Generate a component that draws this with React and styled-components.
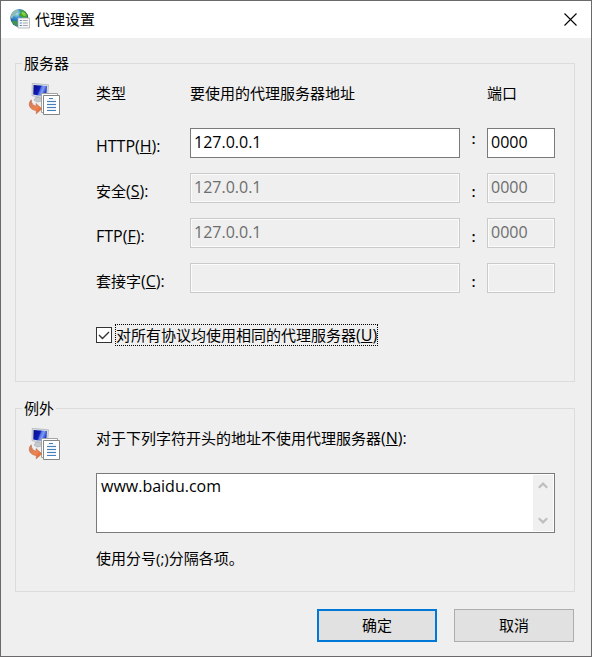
import React from "react";
import styled, { createGlobalStyle } from "styled-components";

const GlobalStyle = createGlobalStyle`
  *, *::before, *::after { box-sizing: border-box; }
  body { margin: 0; background: #efefef; }
  body, button, input, textarea {
    font-family: "Open Sans", "Noto Sans CJK SC", sans-serif;
    font-size: 15px;
    line-height: 20px;
    color: #000;
  }
`;

const Dialog = styled.main`
  display: flex;
  flex-direction: column;
  min-height: 100vh;
  border: 1px solid #6b696b;
  background: #efefef;
`;

const TitleBar = styled.header`
  display: flex;
  align-items: center;
  gap: 5px;
  height: 37px;
  padding: 0 0 1px 9px;
  background: #fff;
`;

const Title = styled.h1`
  flex: 1;
  margin: 0;
  font-size: 15px;
  font-weight: 400;
`;

const CloseButton = styled.button`
  display: flex;
  align-items: center;
  justify-content: center;
  width: 42px;
  height: 35px;
  padding: 0;
  border: 0;
  background: none;
`;

const Content = styled.form`
  display: flex;
  flex: 1;
  flex-direction: column;
  gap: 16px;
  padding: 15px 16px 14px 14px;
`;

const Group = styled.fieldset`
  min-width: 0;
  margin: 0;
  padding: 0 19px 0 12px;
  border: 1px solid #dcdcdc;
`;

const Legend = styled.legend`
  margin-left: -6px;
  padding: 0 2px;
`;

const GroupBody = styled.div`
  display: grid;
  grid-template-columns: 32px minmax(0, 1fr);
  column-gap: 36px;
  padding: ${(p) => p.$pad};
`;

const ProxyGrid = styled.div`
  display: grid;
  grid-template-columns: 94px minmax(0, 1fr) 27px 68px;
  grid-template-rows: 30px;
  row-gap: 15px;
`;

const Heading = styled.span`
  grid-column: ${(p) => p.$column};
`;

const FieldLabel = styled.label`
  grid-column: 1;
  padding-top: 8px;
  font-size: ${(p) => (p.$latin ? "16px" : "15px")};
`;

const Latin = styled.span`
  font-size: 16px;
`;

const Colon = styled.span`
  padding-top: ${(p) => (p.$raised ? "0" : "8px")};
  text-align: center;
  font-weight: 600;
`;

const TextField = styled.input`
  width: 100%;
  height: 30px;
  padding: 0 3px 3px;
  border: 1px solid #7a7a7a;
  border-radius: 0;
  outline: 0;
  background: #fff;
  font-size: 16px;

  &:disabled {
    border-color: #cacaca;
    background: #efefef;
    box-shadow: inset 0 0 0 1px #fbfbfb;
    color: #6d6d6d;
  }
`;

const CheckRow = styled.div`
  display: flex;
  align-items: center;
  gap: 3px;
  margin-top: 31px;
`;

const CheckBox = styled.input`
  appearance: none;
  width: 16px;
  height: 16px;
  margin: 0;
  border: 1px solid #333;
  background: #fff;

  &:checked {
    background: #fff url("data:image/svg+xml,%3Csvg xmlns='http://www.w3.org/2000/svg' viewBox='0 0 14 14'%3E%3Cpath d='M2 7l3.5 3.5L12 4' fill='none' stroke='%23333' stroke-width='1.4'/%3E%3C/svg%3E") center / 14px;
  }
`;

const CheckLabel = styled.label`
  height: 22px;
  border: 1px dotted #000;
`;

const Exceptions = styled.div`
  display: flex;
  flex-direction: column;
  gap: 15px;
`;

const ExceptionLabel = styled.label`
  height: 30px;
`;

const AreaFrame = styled.div`
  display: flex;
  height: 60px;
  padding: 1px;
  border: 1px solid #7a7a7a;
  background: #fff;
`;

const TextArea = styled.textarea`
  flex: 1;
  min-width: 0;
  padding: 1px 3px;
  border: 0;
  outline: 0;
  resize: none;
  overflow: hidden;
  background: transparent;
  font-size: 16px;
`;

const ScrollTrack = styled.div`
  display: flex;
  flex-direction: column;
  justify-content: space-between;
  width: 20px;
  background: #f0f0f0;
`;

const ScrollButton = styled.button`
  display: flex;
  align-items: center;
  justify-content: center;
  height: 21px;
  padding: 0;
  border: 0;
  background: none;
`;

const Hint = styled.p`
  margin: 0;
`;

const Footer = styled.footer`
  display: flex;
  justify-content: flex-end;
  gap: 17px;
  margin-top: auto;
  padding-right: 1px;
`;

const PushButton = styled.button`
  width: 120px;
  height: 33px;
  padding: 0 0 2px;
  border: ${(p) => (p.$primary ? "2px solid #0078d7" : "1px solid #adadad")};
  background: #e1e1e1;
`;

function GlobeIcon() {
  return (
    <svg width="20" height="20" viewBox="0 0 20 20" aria-hidden="true">
      <defs>
        <radialGradient id="sea" cx="36%" cy="25%" r="75%">
          <stop offset="0" stopColor="#b4e2f6" />
          <stop offset=".35" stopColor="#338ccf" />
          <stop offset="1" stopColor="#0d2f86" />
        </radialGradient>
      </defs>
      <circle cx="9.3" cy="9" r="8.9" fill="url(#sea)" />
      <path d="M2 4C4 1.5 6.500.6 9 .6L7.800 2.500 8 3.600 5.500 4.800 4.800 7 3 7.600 2.600 9.500 1 9C.7 7.400 1 5.700 2 4z" fill="#8fbcae" />
      <path d="M10.500.8c3.200.3 5.700 2.300 7 5.200L17 9.500 13 9 11.500 7.500 9.500 7 9 5.500 10.700 4z" fill="#43a526" />
      <path d="M12 2.500l3 1.500 1 2.500-2 .5-2.500-2z" fill="#86cf4c" />
      <path d="M3.600 11.500l3.600.8.8 2.500-1 2.600C4.500 16.500 2.500 14.700 1.500 12.500z" fill="#3f9452" />
      <path d="M8 9h11.500v10H8z" fill="#f7f7f7" stroke="#a7adb2" strokeWidth=".8" />
      <path d="M9.800 11.500h2M9.800 14h2M9.800 16.500h2" stroke="#4b86bd" strokeWidth="1.200" />
      <path d="M12.800 11.500h5M12.800 14h5M12.800 16.500h5" stroke="#a4a9ae" />
    </svg>
  );
}

function ServerIcon() {
  return (
    <svg width="32" height="34" viewBox="0 1 32 34" aria-hidden="true">
      <defs>
        <linearGradient id="screen" x1="0" y1="0" x2="1" y2=".35">
          <stop offset="0" stopColor="#0a0f86" />
          <stop offset=".5" stopColor="#101cb8" />
          <stop offset=".6" stopColor="#5873e4" />
          <stop offset=".75" stopColor="#7f9df0" />
          <stop offset="1" stopColor="#1c36c4" />
        </linearGradient>
        <linearGradient id="arrow" x1="0" y1="0" x2="1" y2="1">
          <stop offset="0" stopColor="#c67b61" />
          <stop offset=".55" stopColor="#ef8650" />
          <stop offset="1" stopColor="#d95b21" />
        </linearGradient>
      </defs>
      <path d="M8 15l5 1 1 3-5 1-3-2z" fill="#c3c9ce" stroke="#a4a9ae" strokeWidth=".6" />
      <path d="M4.300 1.300L20.500 2.800 19.500 16.700 4 13.700z" fill="#d8dde0" stroke="#a9b0b5" strokeWidth=".7" />
      <path d="M5.600 2.900L19 4.100 18.200 14.900 5.300 12.500z" fill="url(#screen)" />
      <path d="M13.500 11.500h16v19h-16z" fill="#fff" stroke="#a3a3a3" />
      <path d="M15.500 13.500h16v19h-16z" fill="#fff" stroke="#858585" />
      <path d="M21 16.500h4M19 19.500h9M19 22.500h9M19 25.500h9M19 28.500h9" stroke="#477db9" strokeWidth="1.200" />
      <path d="M19 18h9M19 21h9M19 24h9M19 27h9" stroke="#c3d8eb" strokeWidth=".6" />
      <path d="M3.200 17.800C3.300 21.500 5 23.700 8.300 24.200L8 21.500 13.800 26.800 8.300 31.800 8.300 28.500C2 28-1 22.500 3.200 17.800z" fill="url(#arrow)" stroke="#bd6645" strokeWidth=".6" />
    </svg>
  );
}

function Chevron({ up }) {
  return (
    <svg width="10" height="7" viewBox="0 0 10 7" aria-hidden="true">
      <path d={up ? "M.8 5.800L5 1.600l4.200 4.200" : "M.8 1.200L5 5.400l4.200-4.200"} fill="none" stroke="#bfbfbf" strokeWidth="2.200" />
    </svg>
  );
}

const protocols = [
  { id: "http", name: "HTTP", latin: true, mnemonic: "H", address: "127.0.0.1", port: "0000", enabled: true },
  { id: "secure", name: "安全", mnemonic: "S", address: "127.0.0.1", port: "0000" },
  { id: "ftp", name: "FTP", latin: true, mnemonic: "F", address: "127.0.0.1", port: "0000" },
  { id: "socks", name: "套接字", mnemonic: "C", address: "", port: "" },
];

function ProtocolRow({ id, name, latin, mnemonic, address, port, enabled }) {
  return (
    <>
      <FieldLabel htmlFor={id} $latin={latin}>
        {name}
        <Latin>
          (<u>{mnemonic}</u>):
        </Latin>
      </FieldLabel>
      <TextField id={id} defaultValue={address} disabled={!enabled} />
      <Colon $raised={enabled}>:</Colon>
      <TextField aria-label={`${name} 端口`} defaultValue={port} disabled={!enabled} />
    </>
  );
}

export default function App() {
  return (
    <>
      <GlobalStyle />
      <Dialog>
        <TitleBar>
          <GlobeIcon />
          <Title>代理设置</Title>
          <CloseButton type="button" aria-label="关闭">
            <svg width="13" height="13" viewBox="0 0 13 13" aria-hidden="true">
              <path d="M.5.5l12 12M12.500.5l-12 12" stroke="#000" strokeWidth="1.100" />
            </svg>
          </CloseButton>
        </TitleBar>
        <Content onSubmit={(e) => e.preventDefault()}>
          <Group>
            <Legend>服务器</Legend>
            <GroupBody $pad="10px 0 35px">
              <ServerIcon />
              <div>
                <ProxyGrid>
                  <Heading $column="1">类型</Heading>
                  <Heading $column="2">要使用的代理服务器地址</Heading>
                  <Heading $column="4">端口</Heading>
                  {protocols.map((p) => (
                    <ProtocolRow key={p.id} {...p} />
                  ))}
                </ProxyGrid>
                <CheckRow>
                  <CheckBox id="same" type="checkbox" defaultChecked />
                  <CheckLabel htmlFor="same">
                    对所有协议均使用相同的代理服务器
                    <Latin>
                      (<u>U</u>)
                    </Latin>
                  </CheckLabel>
                </CheckRow>
              </div>
            </GroupBody>
          </Group>
          <Group>
            <Legend>例外</Legend>
            <GroupBody $pad="10px 0 23px">
              <ServerIcon />
              <Exceptions>
                <ExceptionLabel htmlFor="exceptions">
                  对于下列字符开头的地址不使用代理服务器
                  <Latin>
                    (<u>N</u>):
                  </Latin>
                </ExceptionLabel>
                <AreaFrame>
                  <TextArea id="exceptions" defaultValue="www.baidu.com" />
                  <ScrollTrack>
                    <ScrollButton type="button" aria-label="向上滚动">
                      <Chevron up />
                    </ScrollButton>
                    <ScrollButton type="button" aria-label="向下滚动">
                      <Chevron />
                    </ScrollButton>
                  </ScrollTrack>
                </AreaFrame>
                <Hint>使用分号(;)分隔各项。</Hint>
              </Exceptions>
            </GroupBody>
          </Group>
          <Footer>
            <PushButton type="submit" $primary>确定</PushButton>
            <PushButton type="button">取消</PushButton>
          </Footer>
        </Content>
      </Dialog>
    </>
  );
}
